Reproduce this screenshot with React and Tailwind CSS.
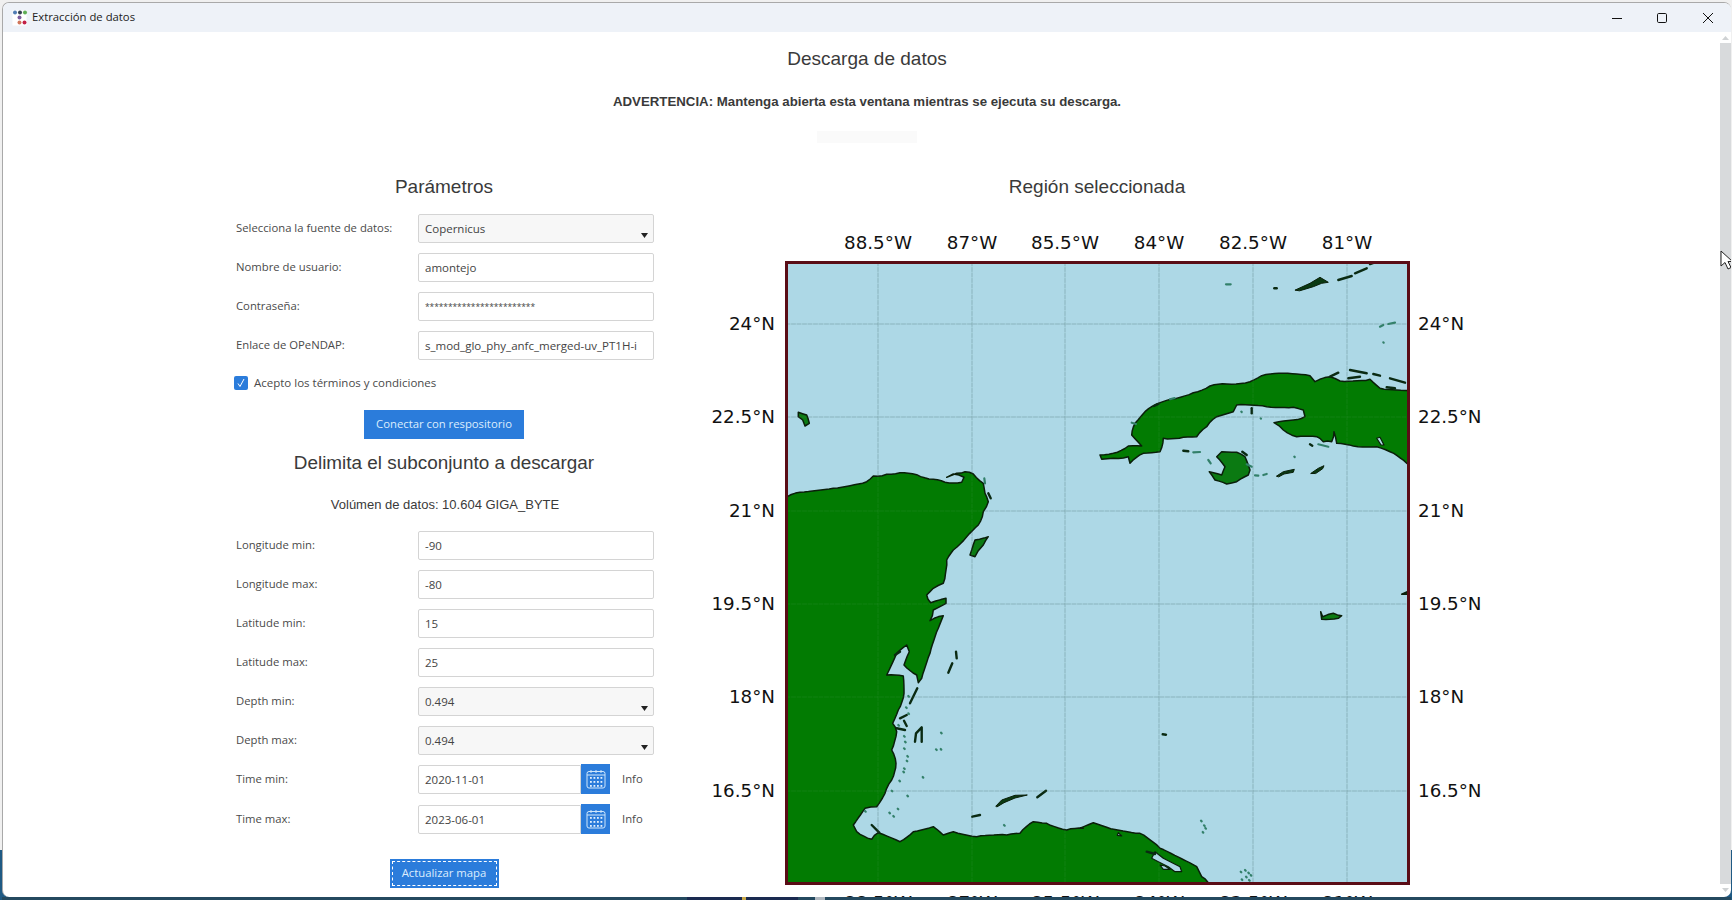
import React from 'react';

const UI_FONT = "font-['Open_Sans',sans-serif]";
const HEAD_FONT = "font-['Liberation_Sans',sans-serif]";

const z = (ox, oy, pts) => pts.map(([x, y]) => [ox + x / 3, oy + y / 3]);
const toPath = (pts, close = true) =>
  'M' + pts.map(([x, y]) => `${x.toFixed(1)} ${y.toFixed(1)}`).join('L') + (close ? 'Z' : '');

// breaks long straight segments up and wiggles them a little so the coast doesn't look like a polygon
const rough = (pts, amp = 0.8) => {
  const out = [];
  pts.forEach(([x, y], i) => {
    const [nx, ny] = pts[(i + 1) % pts.length];
    const len = Math.hypot(nx - x, ny - y);
    const steps = Math.max(1, Math.floor(len / 4));
    for (let s = 0; s < steps; s++) {
      const t = s / steps;
      const w = s === 0 ? 0 : Math.sin(x * 12.9898 + y * 78.233 + s * 37.719) * amp;
      out.push([x + (nx - x) * t + (-(ny - y) / (len || 1)) * w, y + (ny - y) * t + ((nx - x) / (len || 1)) * w]);
    }
  });
  return out;
};

const A = [700, 200];
const B = [1080, 200];
const C = [700, 550];
const D = [1080, 550];

const mainland = [
  [780, 890],
  [780, 500],
  ...z(...A, [
    [262, 890], [300, 877], [400, 865], [500, 845], [520, 828], [560, 823], [600, 818], [650, 824], [700, 838],
    [735, 847], [785, 847], [792, 832], [760, 822], [740, 832], [770, 820], [795, 815], [820, 822],
    [850, 850], [855, 880], [865, 905], [850, 935], [835, 975], [800, 1010], [760, 1050],
  ]),
  ...z(...C, [
    [740, 30], [730, 100], [700, 115], [680, 135], [692, 158], [738, 145], [738, 160], [700, 180],
    [690, 212], [730, 197], [715, 235], [690, 310], [665, 385], [655, 398], [650, 375], [612, 345],
    [628, 305], [620, 285], [590, 310], [560, 375], [610, 378], [612, 430], [595, 480], [578, 520],
    [590, 545], [575, 600], [588, 640], [575, 690], [555, 730], [530, 770], [495, 775], [460, 825],
    [470, 845], [515, 868], [535, 848], [600, 875], [640, 845], [700, 830], [730, 855], [760, 845],
    [830, 860], [920, 855], [960, 850], [1000, 815], [1040, 820], [1100, 840], [1150, 835],
  ]),
  ...z(...D, [
    [0, 835], [40, 818], [80, 832], [180, 850], [240, 895], [350, 950], [365, 980], [385, 998], [385, 1020],
  ]),
];

const cuba = z(...B, [
  [60, 765], [100, 760], [145, 738], [185, 738], [155, 705], [165, 670], [195, 635], [230, 612], [275, 597],
  [340, 578], [390, 558], [440, 552], [510, 545], [545, 527], [610, 520], [690, 527], [705, 545], [750, 530],
  [780, 543], [870, 538], [900, 565], [1000, 570], [1000, 800], [980, 790], [930, 755], [890, 740], [820, 738], [770, 730],
  [762, 695], [755, 725], [730, 725], [710, 710], [650, 710], [610, 690], [582, 668], [640, 660], [675, 650],
  [670, 630], [640, 622], [560, 620], [470, 615], [460, 635], [410, 650], [380, 680], [350, 710], [310, 712],
  [250, 715], [240, 755], [190, 760], [150, 790], [145, 770], [100, 775], [65, 778],
]);

const greenShapes = [
  z(...B, [[410, 770], [425, 755], [470, 757], [495, 770], [510, 810], [505, 825], [470, 845], [440, 852], [405, 840], [388, 815], [425, 825], [435, 800]]),
  z(...A, [[815, 1050], [825, 1020], [865, 1010], [850, 1035], [835, 1052]]).concat(z(...C, [[825, 20], [810, 15]])),
  z(...A, [[295, 637], [320, 645], [328, 670], [315, 678], [308, 660], [295, 650]]),
  z(...D, [[722, 185], [728, 200], [760, 190], [785, 197], [775, 205], [725, 208]]),
  z(...D, [[965, 133], [982, 125], [982, 133]]),
];

const lagoons = [
  z(...B, [[890, 715], [900, 712], [912, 735], [903, 735]]),
  z(...D, [[115, 848], [125, 858], [112, 856]]),
  z(...D, [[225, 905], [250, 925], [300, 950], [305, 965], [285, 965], [265, 950], [235, 935], [215, 925]]),
  z(...D, [[240, 945], [255, 948], [270, 958], [250, 958]]),
];

// the cays with some body to them
const cayShapes = [
  z(...B, [[646, 270], [690, 250], [720, 232], [745, 247], [725, 250], [700, 260], [660, 272]]),
  z(...C, [[888, 768], [905, 750], [945, 736], [982, 735], [945, 744], [912, 758], [892, 770]]),
  z(...B, [[590, 828], [610, 815], [643, 808], [640, 817], [612, 822], [597, 830]]),
  z(...B, [[693, 820], [715, 805], [732, 797], [728, 806], [708, 820]]),
];

// thin black cays, drawn as thick strokes
const darkCays = [
  z(...B, [[775, 240], [815, 228]]),
  z(...B, [[825, 220], [860, 205]]),
  z(...B, [[870, 192], [885, 187]]),
  z(...B, [[583, 265], [590, 265]]),
  z(...B, [[810, 510], [860, 520]]),
  z(...B, [[805, 535], [840, 530]]),
  z(...B, [[880, 522], [900, 527]]),
  z(...B, [[930, 535], [975, 548]]),
  z(...B, [[750, 530], [775, 518]]),
  z(...B, [[920, 562], [945, 565]]),
  z(...B, [[310, 752], [325, 754]]),
  z(...B, [[487, 755], [500, 765]]),
  z(...B, [[690, 733], [697, 737]]),
  z(...B, [[515, 625], [515, 640]]),
  z(...B, [[222, 618], [235, 612]]),
  z(...C, [[768, 305], [770, 325]]),
  z(...C, [[757, 340], [745, 368]]),
  z(...C, [[645, 575], [648, 550], [665, 532], [665, 575]]),
  z(...C, [[1012, 742], [1038, 722]]),
  z(...C, [[817, 800], [840, 795]]),
  z(...C, [[600, 505], [620, 495]]),
  z(...C, [[612, 512], [620, 528]]),
  z(...C, [[630, 460], [652, 415]]),
  z(...C, [[515, 825], [538, 848]]),
  z(...C, [[585, 315], [600, 305]]),
  z(...C, [[590, 535], [615, 540]]),
  z(...D, [[248, 553], [258, 554]]),
  z(...D, [[200, 905], [225, 912]]),
  z(...A, [[865, 880], [872, 895]]),
];

// the small green specks
const specks = [
  z(...B, [[438, 253], [452, 253]]),
  z(...B, [[340, 757], [360, 756]]),
  z(...B, [[385, 780], [392, 790]]),
  z(...B, [[500, 793], [515, 800]]),
  z(...B, [[525, 826], [535, 827]]),
  z(...B, [[550, 825], [560, 822]]),
  z(...B, [[715, 733], [745, 740]]),
  z(...B, [[484, 635], [485, 636]]),
  z(...B, [[542, 655], [543, 656]]),
  z(...B, [[643, 770], [644, 771]]),
  z(...B, [[900, 380], [910, 375]]),
  z(...B, [[925, 372], [945, 368]]),
  z(...B, [[910, 427], [911, 428]]),
  z(...B, [[155, 668], [168, 672]]),
  z(...B, [[270, 598], [284, 594]]),
  z(...A, [[853, 835], [855, 850]]),
  ...[[625, 438], [618, 472], [625, 490], [595, 525], [612, 558], [615, 575], [612, 595], [622, 618], [620, 632], [612, 655], [610, 665], [598, 692], [575, 722], [622, 737], [668, 681], [723, 548], [708, 598], [722, 597], [495, 783], [568, 788], [580, 798], [593, 776], [912, 825]].map(([x, y]) => z(...C, [[x, y], [x + 2, y + 2]])),
  ...[[363, 812], [372, 826], [376, 834], [368, 846], [482, 965], [495, 960], [505, 968], [512, 975], [485, 988], [498, 980], [507, 990]].map(([x, y]) => z(...D, [[x, y], [x + 2, y + 2]])),
];

const lonTicks = [
  [878, '88.5°W'], [972, '87°W'], [1065, '85.5°W'], [1159, '84°W'], [1253, '82.5°W'], [1347, '81°W'],
];
const latTicks = [
  [324, '24°N'], [417, '22.5°N'], [511, '21°N'], [604, '19.5°N'], [697, '18°N'], [791, '16.5°N'],
];

const GridLines = ({ color, opacity }) => (
  <g stroke={color} strokeOpacity={opacity} strokeWidth="1" strokeDasharray="4 1.5">
    {lonTicks.map(([x]) => (
      <line key={x} x1={x} x2={x} y1="262" y2="884" />
    ))}
    {latTicks.map(([y]) => (
      <line key={y} x1="786" x2="1409" y1={y} y2={y} />
    ))}
  </g>
);

const MapFigure = () => (
  <svg width="800" height="685" viewBox="697 225 800 685" className="mt-[26px] block shrink-0">
    <defs>
      <clipPath id="frame">
        <rect x="786" y="262" width="623" height="622" />
      </clipPath>
    </defs>
    <rect x="786" y="262" width="623" height="622" fill="#add8e6" />
    <g clipPath="url(#frame)" strokeLinejoin="round" strokeLinecap="round">
      <GridLines color="#5f8590" opacity="0.4" />
      <path d={toPath(rough(mainland))} fill="#027b02" stroke="#0a1f0a" strokeWidth="1.5" />
      <path d={toPath(rough(cuba))} fill="#027b02" stroke="#0a1f0a" strokeWidth="1.5" />
      {greenShapes.map((s, i) => (
        <path key={i} d={toPath(rough(s, 0.4))} fill="#0b7a12" stroke="#0a1f0a" strokeWidth="1.5" />
      ))}
      {lagoons.map((s, i) => (
        <path key={i} d={toPath(s)} fill="#add8e6" stroke="#0a1f0a" strokeWidth="1.2" />
      ))}
      {cayShapes.map((s, i) => (
        <path key={i} d={toPath(s)} fill="#0a3a12" stroke="#0a1f0a" strokeWidth="1" />
      ))}
      {darkCays.map((s, i) => (
        <path key={i} d={toPath(s, false)} fill="none" stroke="#0a2a12" strokeWidth="2.4" />
      ))}
      {specks.map((s, i) => (
        <path key={i} d={toPath(s, false)} fill="none" stroke="#33806a" strokeWidth="2.2" />
      ))}
      <GridLines color="#8fc0a0" opacity="0.12" />
    </g>
    <rect x="786.5" y="262.5" width="622" height="621" fill="none" stroke="#5a0d16" strokeWidth="3" />
    <g fontFamily="'DejaVu Sans', sans-serif" fontSize="18.3" fill="#111">
      {lonTicks.map(([x, t]) => (
        <text key={x} x={x} y="249" textAnchor="middle">{t}</text>
      ))}
      {lonTicks.map(([x, t]) => (
        <text key={x} x={x} y="909" textAnchor="middle">{t}</text>
      ))}
      {latTicks.map(([y, t]) => (
        <text key={y} x="775" y={y + 5.5} textAnchor="end">{t}</text>
      ))}
      {latTicks.map(([y, t]) => (
        <text key={y} x="1418" y={y + 5.5}>{t}</text>
      ))}
    </g>
  </svg>
);

const AppLogo = () => (
  <svg width="16" height="16" viewBox="0 0 16 16" className="shrink-0">
    <rect x="0.5" y="0.5" width="14" height="15" fill="#fff" />
    <circle cx="3" cy="2.5" r="2" fill="#4f7cb4" />
    <circle cx="8" cy="2.5" r="2" fill="#33404f" />
    <circle cx="13" cy="2.5" r="2" fill="#5fae55" />
    <circle cx="7.5" cy="7.5" r="2" fill="#7b5b9e" />
    <circle cx="7.5" cy="12.5" r="2" fill="#d0765a" />
    <circle cx="12.5" cy="12.5" r="2" fill="#c21f45" />
  </svg>
);

const WindowControls = () => (
  <div className="ml-auto flex items-center">
    <svg width="12" height="12" viewBox="0 0 12 12" className="mr-[33px]">
      <path d="M1 6.5H11" stroke="#111" strokeWidth="1" />
    </svg>
    <svg width="12" height="12" viewBox="0 0 12 12" className="mr-[34px]">
      <rect x="1.5" y="1.5" width="9" height="9" rx="1.2" fill="none" stroke="#111" strokeWidth="1" />
    </svg>
    <svg width="12" height="12" viewBox="0 0 12 12" className="mr-[17px]">
      <path d="M1 1L11 11M11 1L1 11" stroke="#111" strokeWidth="1" />
    </svg>
  </div>
);

const TextRow = ({ label, value, inputText = 'text-[11.5px]' }) => (
  <div className="mt-[10px] flex h-[29px] items-center first:mt-0">
    <label className="w-[182px] shrink-0 text-[11.3px] text-[#4a4a4a]">{label}</label>
    <input
      readOnly
      value={value}
      className={`h-full w-[236px] rounded-[2px] border border-[#d4d4d4] bg-white px-[6px] text-[#444] outline-none ${inputText}`}
    />
  </div>
);

const SelectRow = ({ label, value }) => (
  <div className="mt-[10px] flex h-[29px] items-center first:mt-0">
    <label className="w-[182px] shrink-0 text-[11.3px] text-[#4a4a4a]">{label}</label>
    <div className="relative flex h-full w-[236px] items-center rounded-[2px] border border-[#d4d4d4] bg-[#f7f7f7] px-[6px] text-[11.5px] text-[#444]">
      {value}
      <svg width="8" height="5" viewBox="0 0 8 5" className="absolute right-[4px] bottom-[4px]">
        <path d="M0 0H7L3.5 5Z" fill="#222" />
      </svg>
    </div>
  </div>
);

const CalendarIcon = () => (
  <svg width="20" height="20" viewBox="0 0 20 20" fill="none" stroke="#cfe6fb" strokeWidth="1">
    <rect x="1" y="2.5" width="18" height="16.5" rx="2" />
    <path d="M1 6H19M5 1V4M10 1V4M15 1V4" />
    <g fill="#e4f1fd" stroke="none">
      {[5, 9, 13].map((y) =>
        [4, 7.5, 11, 14.5].map((x) => <rect key={`${x}-${y}`} x={x} y={y + 3} width="1.8" height="1.8" />)
      )}
    </g>
  </svg>
);

const DateRow = ({ label, value, className = '' }) => (
  <div className={`flex h-[30px] items-center ${className}`}>
    <label className="w-[182px] shrink-0 text-[11.3px] text-[#4a4a4a]">{label}</label>
    <input
      readOnly
      value={value}
      className="h-[29px] w-[163px] rounded-l-[2px] border border-[#d4d4d4] bg-white px-[6px] text-[11.5px] text-[#444] outline-none"
    />
    <button className="flex h-[30px] w-[29px] items-center justify-center bg-[#2b7cdb]">
      <CalendarIcon />
    </button>
    <span className="ml-[12px] text-[11.3px] text-[#4a4a4a]">Info</span>
  </div>
);

const FormColumn = () => (
  <div className={`w-[418px] shrink-0 ${UI_FONT}`}>
    <h2 className={`h-[26px] pr-[2px] text-center text-[19px] leading-[28px] text-[#3a3a3a] ${HEAD_FONT}`}>Parámetros</h2>
    <div className="mt-[15px]">
      <SelectRow label="Selecciona la fuente de datos:" value="Copernicus" />
      <TextRow label="Nombre de usuario:" value="amontejo" />
      <TextRow label="Contraseña:" value="************************" inputText="text-[8.5px] tracking-[-0.1px]" />
      <TextRow label="Enlace de OPeNDAP:" value="s_mod_glo_phy_anfc_merged-uv_PT1H-i" />
    </div>
    <div className="mt-[15px] flex h-[16px] items-center">
      <span className="-ml-[2px] flex h-[14px] w-[14px] items-center justify-center rounded-[2px] bg-[#2b7cdb]">
        <svg width="10" height="10" viewBox="0 0 10 10">
          <path d="M2 5.5L4 8.5L8 1" fill="none" stroke="#fff" strokeWidth="1" />
        </svg>
      </span>
      <span className="ml-[6px] text-[11.5px] text-[#4a4a4a]">Acepto los términos y condiciones</span>
    </div>
    <div className="mt-[19px] flex justify-center pr-[2px]">
      <button className="h-[29px] w-[160px] bg-[#2b7cdb] text-[11.3px] text-[#dcedfd]">Conectar con respositorio</button>
    </div>
    <h2 className={`mt-[11px] h-[26px] pr-[2px] text-center text-[18.9px] leading-[26px] text-[#3a3a3a] ${HEAD_FONT}`}>
      Delimita el subconjunto a descargar
    </h2>
    <p className={`mt-[20px] h-[16px] text-center text-[13px] leading-[17px] text-[#3a3a3a] ${HEAD_FONT}`}>
      Volúmen de datos: 10.604 GIGA_BYTE
    </p>
    <div className="mt-[19px]">
      <TextRow label="Longitude min:" value="-90" />
      <TextRow label="Longitude max:" value="-80" />
      <TextRow label="Latitude min:" value="15" />
      <TextRow label="Latitude max:" value="25" />
      <SelectRow label="Depth min:" value="0.494" />
      <SelectRow label="Depth max:" value="0.494" />
    </div>
    <DateRow label="Time min:" value="2020-11-01" className="mt-[9px]" />
    <DateRow label="Time max:" value="2023-06-01" className="mt-[10px]" />
    <div className="mt-[25px] flex justify-center pr-[2px]">
      <button className="h-[29px] w-[109px] bg-[#2b7cdb] p-[2px] text-[11.3px] text-[#dcedfd]">
        <span className="flex h-full w-full items-center justify-center border border-dashed border-white">
          Actualizar mapa
        </span>
      </button>
    </div>
  </div>
);

const Scrollbar = () => (
  <div className="relative flex w-[11px] shrink-0 flex-col">
    <div className="flex h-[11px] items-center justify-center">
      <svg width="7" height="4" viewBox="0 0 7 4"><path d="M0 4L3.5 0L7 4Z" fill="#cfd2d4" /></svg>
    </div>
    <div className="h-[841px] bg-[#d8dadc]" />
    <div className="flex h-[11px] items-center justify-center">
      <svg width="7" height="4" viewBox="0 0 7 4"><path d="M0 0L3.5 4L7 0Z" fill="#cfd2d4" /></svg>
    </div>
    {/* mouse pointer sitting on the scrollbar */}
    <svg width="12" height="20" viewBox="0 0 12 20" className="absolute top-[218px] left-0">
      <path d="M1 1V16L5 12.5L8 19L11 17.5L8 11.5H12.5Z" fill="#fff" stroke="#222" strokeWidth="1" />
    </svg>
  </div>
);

export default function App() {
  return (
    <div className="h-[900px] w-full overflow-hidden bg-[linear-gradient(#f0f0f0_0,#f0f0f0_850px,#1f5a84_850px)] pt-[2px] pl-[2px] pr-[1px]">
      <div className="h-[895px] overflow-hidden rounded-t-[7px] rounded-b-[7px] border-t border-l border-[#a9a9a9] bg-white">
        <div className={`flex h-[29px] items-center bg-[#eef2f8] pl-[9px] ${UI_FONT}`}>
          <AppLogo />
          <span className="ml-[4px] text-[11.3px] text-[#222]">Extracción de datos</span>
          <WindowControls />
        </div>
        <div className="flex h-[865px]">
          <div className="min-w-0 flex-1 overflow-hidden">
            <div className={`flex flex-col items-center pl-[11px] ${HEAD_FONT}`}>
              <h1 className="mt-[14px] h-[26px] text-[19px] leading-[26px] text-[#3a3a3a]">Descarga de datos</h1>
              <p className="mt-[22px] h-[16px] text-[13.25px] leading-[16px] font-bold text-[#3a3a3a]">
                ADVERTENCIA: Mantenga abierta esta ventana mientras se ejecuta su descarga.
              </p>
              <div className="mt-[21px] h-[12px] w-[100px] bg-[#fafafa]" />
            </div>
            <div className="mt-[30px] flex pl-[233px]">
              <FormColumn />
              <div className="ml-[43px] flex w-[800px] shrink-0 flex-col">
                <h2 className={`h-[26px] text-center text-[19px] leading-[28px] text-[#3a3a3a] ${HEAD_FONT}`}>
                  Región seleccionada
                </h2>
                <MapFigure />
              </div>
            </div>
          </div>
          <Scrollbar />
        </div>
      </div>
      <div className="flex h-[3px] bg-[#24495f]">
        <div className="relative ml-[685px] h-full w-[111px] bg-[#1a2a50]">
          <div className="absolute top-0 left-[55px] h-full w-[4px] bg-[#c9a94a]" />
        </div>
        <div className="ml-[17px] h-full w-[10px] bg-[#b0b8c0]" />
      </div>
    </div>
  );
}
